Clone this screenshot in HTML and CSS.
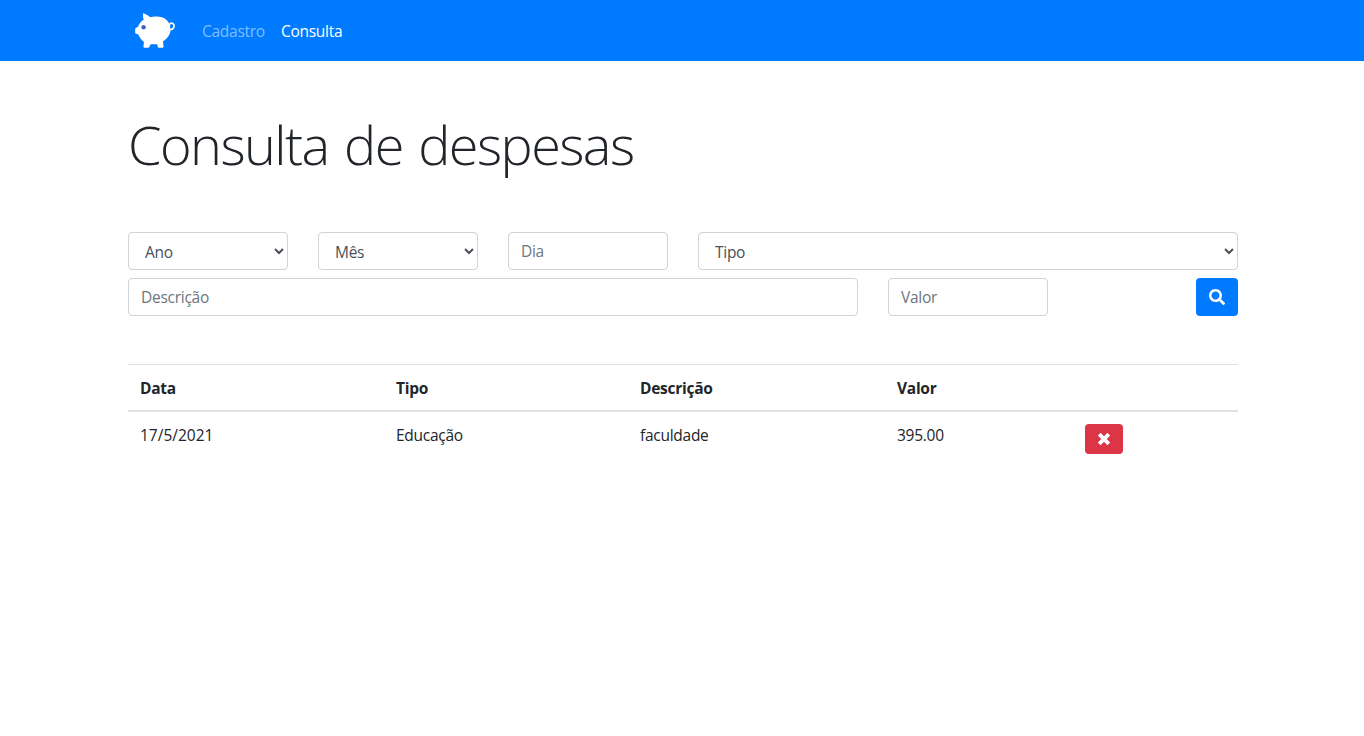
FILE: index.html
```html
<!DOCTYPE html>
<html lang="pt-br">
<head>
<meta charset="utf-8">
<title>Consulta de despesas</title>
<link rel="stylesheet" href="styles.css">
</head>
<body>
<nav class="navbar">
  <div class="container navbar-inner">
    <a class="brand" href="#" aria-label="Início">
      <svg class="logo" width="50" height="44" viewBox="0 0 50 44">
        <path fill="#fff" d="M13.200 5.300C16 6 18.600 7.800 20.200 9.300C23.500 8.300 28.500 8 32 9.200C36 10.600 38.800 13.500 40 17.200L40.500 22C40.300 26.500 37.500 30.500 33 33.500L33.500 38.500Q33.500 39.700 32.500 39.700H29Q28 39.700 27.800 38.700L27.200 36.300H20.600L19.500 38.700Q19 39.700 18 39.700H14.500Q13.300 39.700 13.400 38.500L14 34C11 32 9.500 29.500 8.600 26.800L5.200 25.200V20.500L8.200 18.500C9.200 15.500 11.300 12.900 13.800 11.800C12.800 9.500 12.700 7.500 13.200 5.300Z"/>
        <path fill="none" stroke="#fff" stroke-width="1.700" stroke-linecap="round" d="M39.600 16.300C40.500 14.400 43.400 14.600 44 17.300C44.300 19.700 42.500 21.300 40.300 21.700"/>
        <circle cx="13.600" cy="19.200" r="2.200" fill="#3f63bd"/>
      </svg>
    </a>
    <a class="nav-link" href="#">Cadastro</a>
    <a class="nav-link active" href="#">Consulta</a>
  </div>
</nav>
<main class="container">
  <h1 class="title">Consulta de despesas</h1>
  <form class="filters">
    <select class="control span-2"><option>Ano</option></select>
    <select class="control span-2"><option>Mês</option></select>
    <input class="control span-2" type="text" placeholder="Dia">
    <select class="control span-6"><option>Tipo</option></select>
    <input class="control span-8" type="text" placeholder="Descrição">
    <input class="control span-2" type="text" placeholder="Valor">
    <button class="btn search span-2" type="button" aria-label="Buscar">
      <svg width="16" height="16" viewBox="0 0 512 512" fill="currentColor"><path d="M505 442.700L405.300 343c-4.500-4.500-10.600-7-17-7H372c27.600-35.300 44-79.700 44-128C416 93.100 322.900 0 208 0S0 93.100 0 208s93.100 208 208 208c48.300 0 92.700-16.400 128-44v16.300c0 6.400 2.500 12.500 7 17l99.700 99.700c9.400 9.400 24.600 9.400 33.900 0l28.300-28.300c9.400-9.400 9.400-24.600.1-34zM208 336c-70.700 0-128-57.200-128-128 0-70.700 57.200-128 128-128 70.700 0 128 57.200 128 128 0 70.700-57.200 128-128 128z"/></svg>
    </button>
  </form>
  <table class="table">
    <colgroup><col class="col-date"><col class="col-type"><col class="col-desc"><col class="col-value"><col></colgroup>
    <thead>
      <tr><th>Data</th><th>Tipo</th><th>Descrição</th><th>Valor</th><th></th></tr>
    </thead>
    <tbody>
      <tr>
        <td class="date">17/5/2021</td><td>Educação</td><td>faculdade</td><td>395.00</td>
        <td class="action"><button class="btn remove" type="button" aria-label="Excluir">
          <svg width="14" height="14" viewBox="0 0 14 14" fill="none" stroke="currentColor" stroke-width="3.900"><path d="M2.200 2.200L11.800 11.800M11.800 2.200L2.200 11.800"/></svg>
        </button></td>
      </tr>
    </tbody>
  </table>
</main>
</body>
</html>
```
FILE: styles.css
```css
* { box-sizing: border-box; }
body {
  margin: 0;
  background: #fff;
  color: #212529;
  font: 400 15.500px/24px "Open Sans", "Noto Sans", sans-serif;
  letter-spacing: -0.270px;
}
.container { width: 1110px; margin: 0 auto 0 128px; }
.navbar { background: #007bff; height: 61px; }
.navbar-inner { display: flex; align-items: center; height: 61px; }
.brand { display: flex; margin: 0 14px 2px 2px; }
.logo { display: block; }
.nav-link { padding: 8px; color: rgba(255, 255, 255, 0.500); text-decoration: none; }
.nav-link.active { color: #fff; }
.title {
  margin: 50px 0 54px;
  font-size: 54px;
  font-weight: 300;
  line-height: 67px;
  letter-spacing: -1.550px;
  word-spacing: 3px;
}
.filters {
  display: grid;
  grid-template-columns: repeat(12, 1fr);
  gap: 8px 30px;
  margin-bottom: 48px;
}
.control {
  width: 100%;
  height: 38px;
  padding: 6px 12px;
  border: 1px solid #ced4da;
  border-radius: 4px;
  background: #fff;
  color: #495057;
  font: inherit;
  letter-spacing: inherit;
}
select.control { padding-top: 7px; }
.control::placeholder { color: #6c757d; opacity: 1; }
.span-2 { grid-column: span 2; }
.span-6 { grid-column: span 6; }
.span-8 { grid-column: span 8; }
.btn {
  display: flex;
  align-items: center;
  justify-content: center;
  padding: 0;
  border: 0;
  border-radius: 4px;
  color: #fff;
}
.search { justify-self: end; width: 42px; height: 38px; background: #007bff; }
.remove { width: 38px; height: 30px; background: #dc3545; }
.table { width: 100%; table-layout: fixed; border-spacing: 0; }
.col-date { width: 256px; }
.col-type { width: 244px; }
.col-desc { width: 257px; }
.col-value { width: 188px; }
.table td { padding: 11px 12px; text-align: left; vertical-align: top; }
.table td.action { padding-top: 12px; }
.table .date { letter-spacing: 0; }
.table th { height: 48px; padding: 11px 12px 10px; text-align: left; vertical-align: top; border-top: 1px solid #dee2e6; border-bottom: 2px solid #dee2e6; font-weight: 700; }
```
